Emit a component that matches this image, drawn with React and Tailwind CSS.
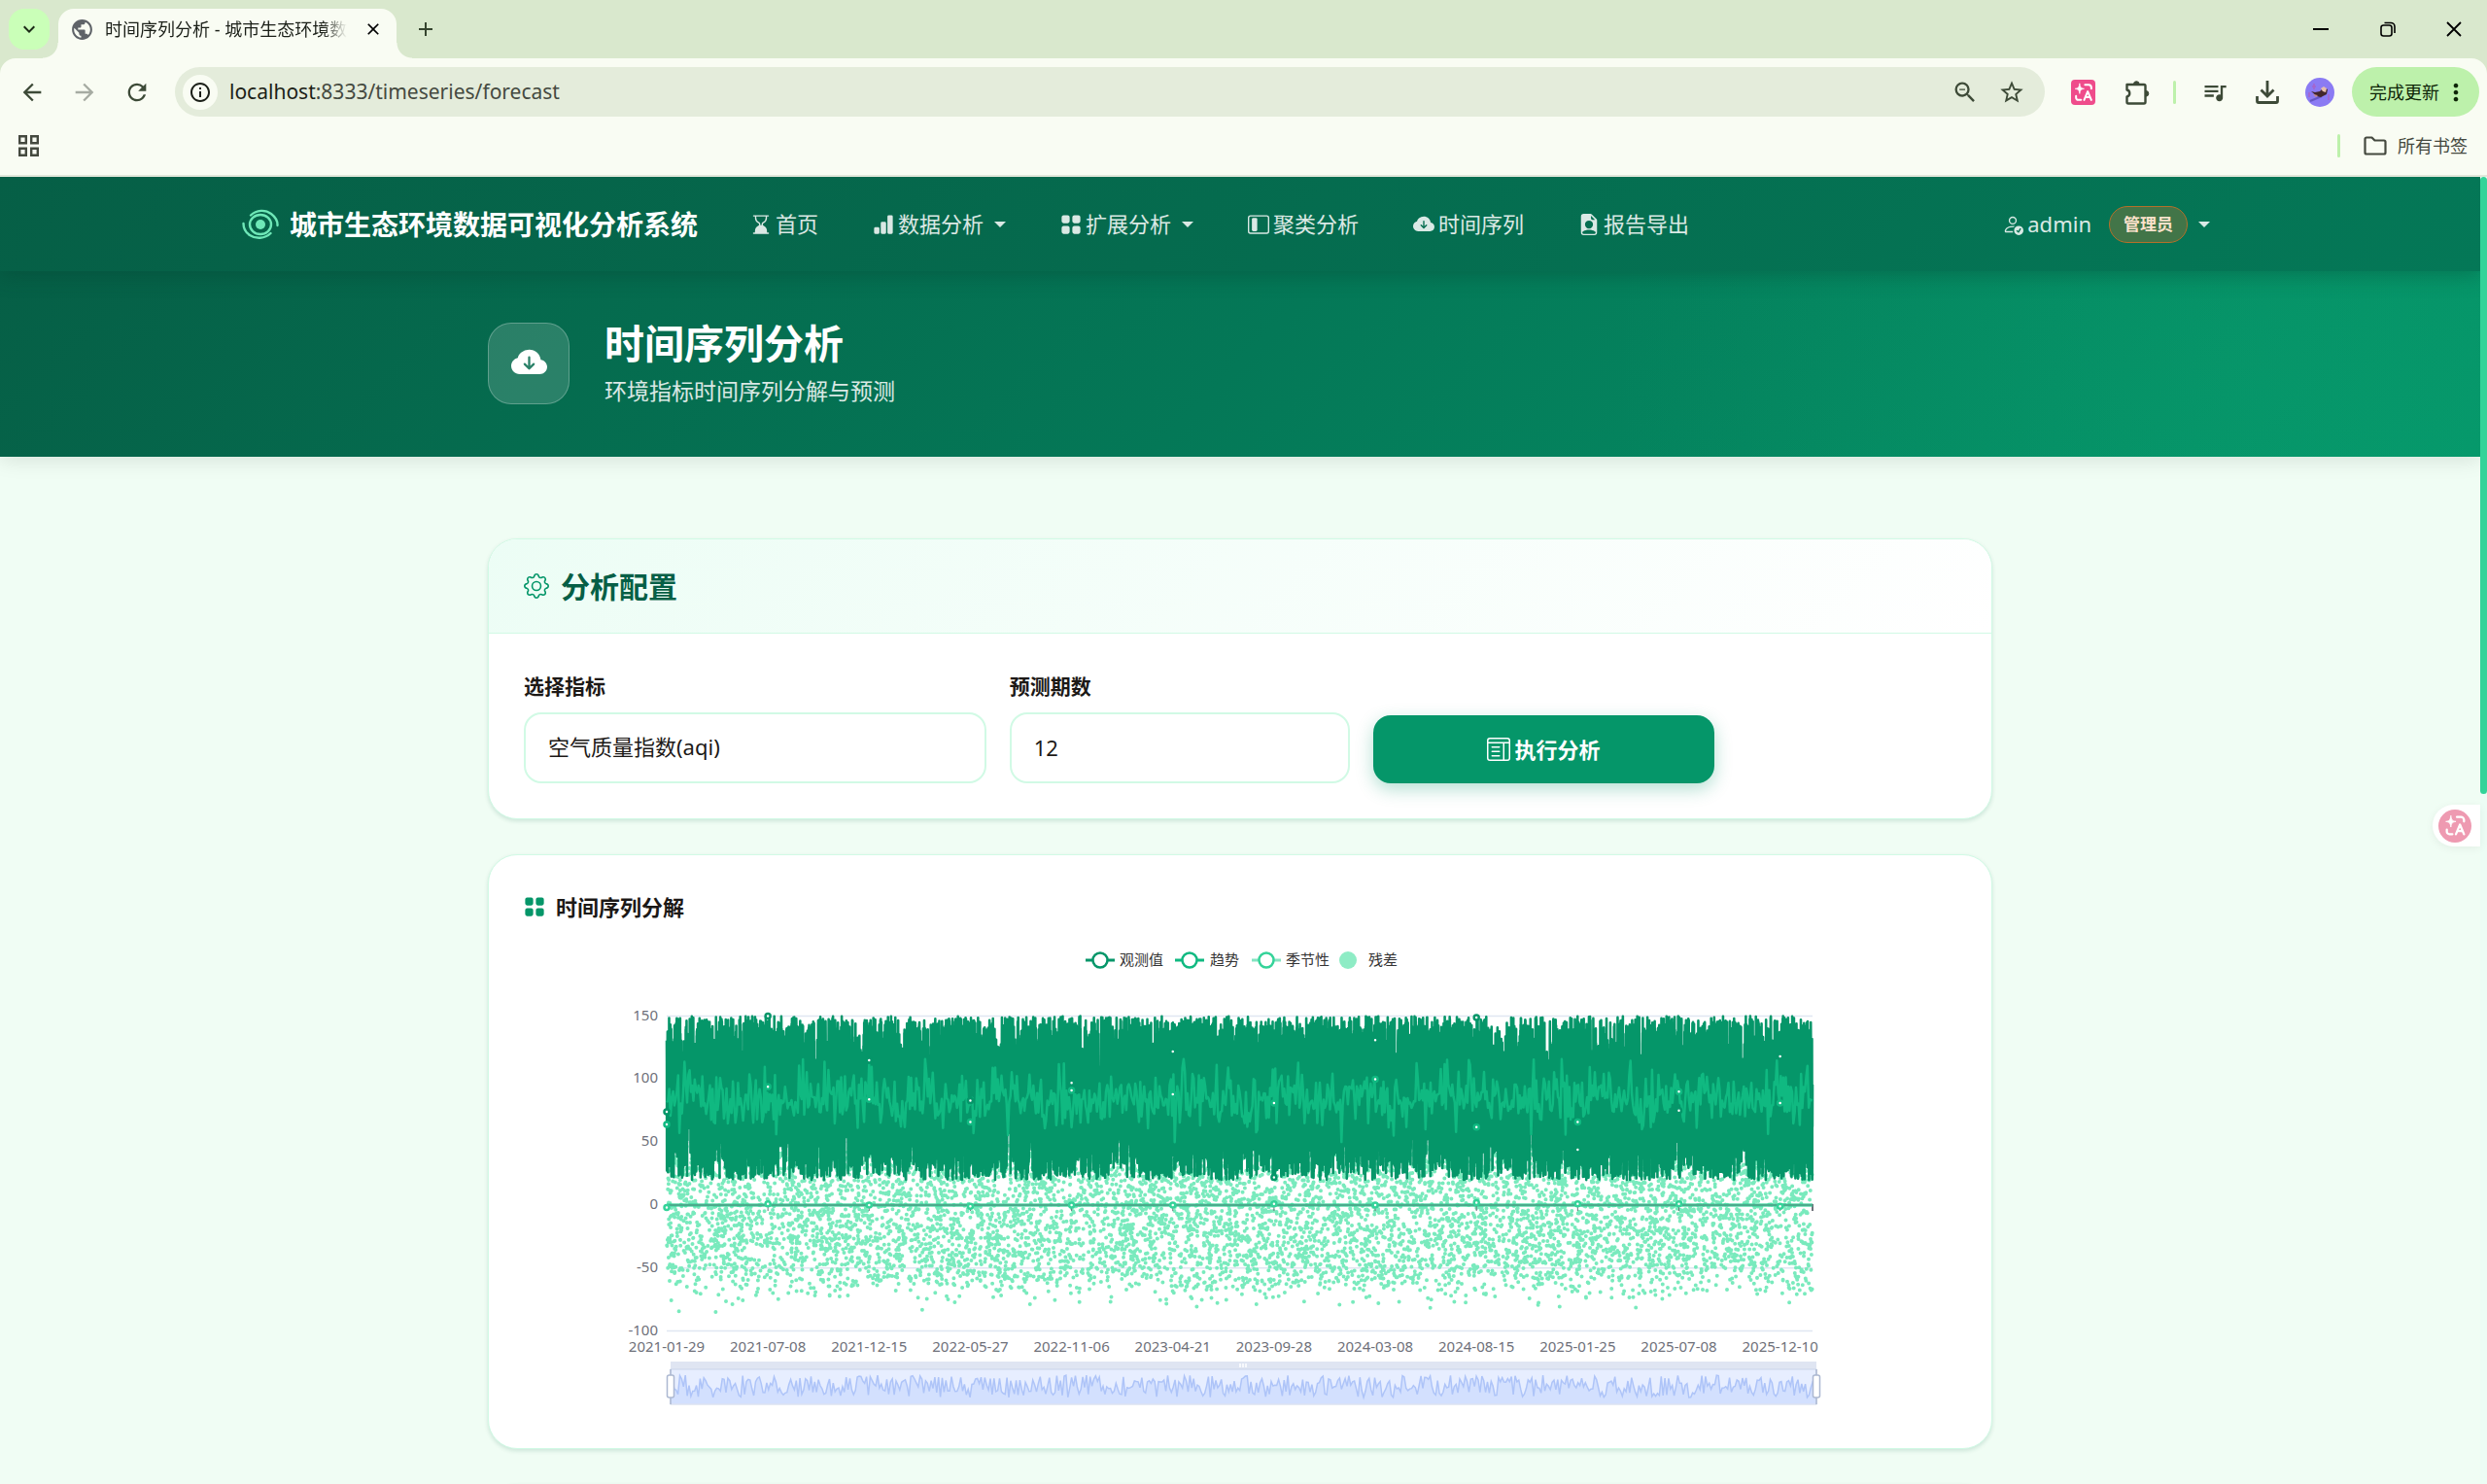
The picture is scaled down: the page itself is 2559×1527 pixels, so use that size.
import React, { useMemo } from 'react';
import {
  BsHourglassBottom,
  BsBarChartFill,
  BsGridFill,
  BsLayoutSidebarInset,
  BsCloudArrowDownFill,
  BsFileEarmarkPersonFill,
  BsPersonCheck,
  BsGear,
  BsLayoutTextWindow,
} from 'react-icons/bs';
import {
  MdArrowBack,
  MdArrowForward,
  MdRefresh,
  MdInfoOutline,
  MdStarOutline,
  MdQueueMusic,
  MdPublic,
  MdOutlineZoomOut,
  MdMoreVert,
  MdClose,
  MdAdd,
  MdKeyboardArrowDown,
} from 'react-icons/md';

function IconButton({ label, className = '', children }) {
  return (
    <button type="button" aria-label={label} className={`flex shrink-0 items-center justify-center ${className}`}>
      {children}
    </button>
  );
}

function TranslateGlyph({ className }) {
  return (
    <svg viewBox="0 0 26 26" className={className} fill="none" stroke="#fff" strokeWidth="2.2" strokeLinecap="round" strokeLinejoin="round">
      <path d="M8.500 3.500c.6 4 1.400 4.900 5 5.500-3.600.6-4.400 1.500-5 5.500-.6-4-1.400-4.900-5-5.500 3.600-.6 4.400-1.500 5-5.500z" fill="#fff" strokeWidth="0.800" />
      <path d="M14.500 4.500h4a3 3 0 0 1 3 3v1.500" />
      <path d="M4.500 17v2a2.500 2.500 0 0 0 2.500 2.500h3" />
      <path d="M13.500 21.500l4-9.500 4 9.500M15 18.500h5" />
    </svg>
  );
}

function TabStrip() {
  return (
    <div className="flex h-[60px] items-stretch bg-[#d9e8cd] pl-[9px]">
      <IconButton label="搜索标签页" className="mt-[9px] size-[42px] rounded-2xl bg-[#caffb8] text-[#1c2b17]">
        <MdKeyboardArrowDown className="size-6" />
      </IconButton>
      <div className="relative mt-[9px] ml-[9px] flex w-[348px] items-center rounded-t-2xl bg-[#f9fcf3] pr-[14px] pb-[9px] pl-[12px]">
        <span className="absolute bottom-0 -left-4 size-4 bg-[radial-gradient(circle_at_0_0,transparent_15px,#f9fcf3_16px)]" />
        <span className="absolute -right-4 bottom-0 size-4 bg-[radial-gradient(circle_at_100%_0,transparent_15px,#f9fcf3_16px)]" />
        <MdPublic className="size-[25px] shrink-0 text-[#5f6368]" />
        <span className="ml-[11px] bg-linear-to-r from-[#1b1f18] from-90% to-transparent bg-clip-text text-lg whitespace-nowrap text-transparent">
          时间序列分析 - 城市生态环境数
        </span>
        <IconButton label="关闭标签页" className="ml-auto text-black">
          <MdClose className="size-5" />
        </IconButton>
      </div>
      <IconButton label="新建标签页" className="ml-[18px] text-[#36452f]">
        <MdAdd className="size-6" />
      </IconButton>
      <div className="ml-auto flex items-center text-black">
        <IconButton label="最小化" className="w-[68px]">
          <svg viewBox="0 0 16 16" className="size-4"><path d="M0 8h16" stroke="currentColor" strokeWidth="2" /></svg>
        </IconButton>
        <IconButton label="还原" className="w-[69px]">
          <svg viewBox="0 0 16 16" className="size-4" fill="none" stroke="currentColor" strokeWidth="1.600">
            <rect x="1" y="4" width="11" height="11" rx="2.500" />
            <path d="M4.500 1.500H11a4 4 0 0 1 4 4V12" />
          </svg>
        </IconButton>
        <IconButton label="关闭" className="w-[68px]">
          <svg viewBox="0 0 16 16" className="size-4"><path d="M1 1l14 14M15 1L1 15" stroke="currentColor" strokeWidth="1.800" /></svg>
        </IconButton>
      </div>
    </div>
  );
}

function Toolbar() {
  return (
    <div className="bg-[#d9e8cd]">
      <div className="flex h-[69px] items-center rounded-t-2xl bg-[#f9fcf3] pr-2 pl-[19px] text-[#3d4a37]">
        <IconButton label="后退" className="w-7"><MdArrowBack className="size-7" /></IconButton>
        <IconButton label="前进" className="ml-[26px] w-7 text-[#a6aba2]"><MdArrowForward className="size-7" /></IconButton>
        <IconButton label="重新加载" className="ml-[26px] w-7"><MdRefresh className="size-7" /></IconButton>
        <div className="ml-[25px] flex h-[51px] flex-1 items-center rounded-full bg-[#e4ecdb] pr-[20px] pl-2">
          <span className="flex size-9 items-center justify-center rounded-full bg-[#f9fcf3] text-[#1b1f18]">
            <MdInfoOutline className="size-6" />
          </span>
          <div className="ml-3 flex-1 text-[21px] whitespace-nowrap">
            <span className="text-[#1b1f18]">localhost</span>
            <span className="text-[#454a41]">:8333/timeseries/forecast</span>
          </div>
          <IconButton label="缩放" className="w-7"><MdOutlineZoomOut className="size-7" /></IconButton>
          <IconButton label="收藏" className="ml-[20px] w-7"><MdStarOutline className="size-7" /></IconButton>
        </div>
        <IconButton label="翻译" className="ml-[27px] h-[26px] w-[25px] rounded-sm bg-[#ef4c8b]"><TranslateGlyph className="size-[24px]" /></IconButton>
        <IconButton label="扩展程序" className="ml-[29px] w-7">
          <svg viewBox="0 0 26 26" className="size-[26px]" fill="none" stroke="currentColor" strokeWidth="2.400" strokeLinejoin="round">
            <path d="M2.500 5H20a1.500 1.500 0 0 1 1.500 1.500V23a1.500 1.500 0 0 1-1.500 1.500H4A1.500 1.500 0 0 1 2.500 23v-5.500a3.600 3.600 0 0 0 0-7z" />
            <path d="M9.500 4.500a2.800 2.800 0 0 1 5.600 0zM22 11.500a2.800 2.800 0 0 1 0 5.600z" fill="currentColor" strokeWidth="1" />
          </svg>
        </IconButton>
        <span className="ml-[23px] h-6 w-[3px] rounded-full bg-[#bdf1ab]" />
        <IconButton label="媒体" className="ml-[26px] w-7"><MdQueueMusic className="size-8" /></IconButton>
        <IconButton label="下载" className="ml-[26px] w-7">
          <svg viewBox="0 0 24 24" className="size-6" fill="none" stroke="currentColor" strokeWidth="2.800">
            <path d="M12 0v15M5.500 9.500l6.500 6.500 6.500-6.500M1.500 16v5a1.500 1.500 0 0 0 1.500 1.500h18a1.500 1.500 0 0 0 1.500-1.500v-5" />
          </svg>
        </IconButton>
        <IconButton label="个人资料" className="ml-[25px] size-[30px] overflow-hidden rounded-full">
          <svg viewBox="0 0 30 30" className="size-[30px]">
            <rect width="30" height="30" fill="#8b7bf3" />
            <path d="M9 6v6M7 9h4M24 17v6M4 15v5" stroke="#a765c9" strokeWidth="1.500" />
            <path d="M5 24l12-5" stroke="#6558c4" strokeWidth="2" />
            <path d="M6 14l4 1 5-1 4-4 4 2-1 5-6 3-4-1z" fill="#43272b" />
            <path d="M16 11l3-2 3 2-1 4-3-1z" fill="#e7bfae" />
            <path d="M8 17l5 1-2 2z" fill="#c98a84" />
          </svg>
        </IconButton>
        <button type="button" className="ml-[18px] flex h-[51px] items-center rounded-full bg-[#bdf1ab] pr-[10px] pl-[18px] text-lg text-[#0e2507]">
          完成更新
          <MdMoreVert className="ml-[3px] size-7" />
        </button>
      </div>
      <div className="flex h-[53px] items-center justify-between border-b-2 border-[#e2e7da] bg-[#f9fcf3] pr-[20px] pb-[10px] pl-[19px] text-[#45493f]">
        <IconButton label="应用">
          <svg viewBox="0 0 21 22" className="h-[22px] w-[21px]" fill="none" stroke="currentColor" strokeWidth="2.400">
            <path d="M1.200 1.200h6.600v7H1.200zM13.200 1.200h6.600v7h-6.600zM1.200 13.800h6.600v7H1.200zM13.200 13.800h6.600v7h-6.600z" />
          </svg>
        </IconButton>
        <div className="flex items-center">
          <span className="h-6 w-[3px] rounded-full bg-[#bdf1ab]" />
          <button type="button" className="ml-[24px] flex items-center text-lg">
            <svg viewBox="0 0 24 20" className="mr-[11px] h-5 w-6" fill="none" stroke="currentColor" strokeWidth="2.200" strokeLinejoin="round">
              <path d="M1.500 3a1.500 1.500 0 0 1 1.500-1.500h5.500l3 3H21A1.500 1.500 0 0 1 22.500 6v11a1.500 1.500 0 0 1-1.500 1.500H3A1.500 1.500 0 0 1 1.500 17z" />
            </svg>
            所有书签
          </button>
        </div>
      </div>
    </div>
  );
}

function Caret() {
  return <span className="ml-[11px] border-x-[6px] border-t-[6px] border-x-transparent border-t-current" />;
}

const navItems = [
  { label: '首页', Icon: BsHourglassBottom },
  { label: '数据分析', Icon: BsBarChartFill, menu: true },
  { label: '扩展分析', Icon: BsGridFill, menu: true },
  { label: '聚类分析', Icon: BsLayoutSidebarInset },
  { label: '时间序列', Icon: BsCloudArrowDownFill },
  { label: '报告导出', Icon: BsFileEarmarkPersonFill },
];

function NavBar() {
  return (
    <header className="relative z-10 bg-[linear-gradient(135deg,#065f46,#047857)] shadow-[0_4px_20px_rgba(6,60,46,0.35)]">
      <div className="mx-auto flex h-[97px] max-w-[2054px] items-center pr-[29px]">
        <a href="#home" className="flex items-center text-[28px] leading-none font-bold whitespace-nowrap text-white">
          <svg viewBox="0 0 38 32" className="mr-[11px] h-8 w-[38px]" fill="none" stroke="#6ee7b7" strokeWidth="2.400" strokeLinecap="round">
            <circle cx="19" cy="16" r="5" fill="#6ee7b7" stroke="none" />
            <ellipse cx="19" cy="16" rx="11" ry="10" />
            <path d="M9 6.500C15 .8 24 .5 30 5c4.500 3.500 6.800 7.500 6.500 12" />
            <path d="M1.500 15c0 5 2 9 6.500 12 6 4 15.500 4 21.500-2" />
          </svg>
          城市生态环境数据可视化分析系统
        </a>
        <nav className="ml-[35px] flex items-center text-[22px] text-white/85">
          {navItems.map(({ label, Icon, menu }) => (
            <a key={label} href={`#${label}`} className="mr-[18px] flex items-center px-[19px] whitespace-nowrap">
              <Icon className="mr-1 size-[22px]" />
              {label}
              {menu && <Caret />}
            </a>
          ))}
        </nav>
        <button type="button" className="ml-auto flex items-center text-[22px] text-white/85">
          <BsPersonCheck className="mr-1 size-[22px]" />
          admin
          <span className="ml-[18px] rounded-full border border-[#b4702a] bg-[#427548] px-[14px] py-[5px] text-[17px] leading-[26px] font-bold text-[#fde2cb]">
            管理员
          </span>
          <Caret />
        </button>
      </div>
    </header>
  );
}

function Hero() {
  return (
    <section className="bg-[radial-gradient(circle_at_90%_50%,rgba(16,185,129,0.16),transparent_640px),linear-gradient(135deg,#065f46,#047857_50%,#059669)] shadow-[0_4px_20px_rgba(0,0,0,0.1)]">
      <div className="mx-auto flex h-[191px] w-[61%] max-w-[1548px] items-center pb-[2px]">
        <div className="flex size-[84px] shrink-0 items-center justify-center rounded-3xl border border-white/25 bg-white/15 text-white">
          <BsCloudArrowDownFill className="size-[37px]" />
        </div>
        <div className="ml-9">
          <h1 className="text-[41px] leading-[56px] font-bold text-white">时间序列分析</h1>
          <p className="text-[23px] leading-[42px] text-white/85">环境指标时间序列分解与预测</p>
        </div>
      </div>
    </section>
  );
}

const fieldClass = 'h-[73px] w-full appearance-none rounded-[18px] border-2 border-[#d1fae5] bg-white px-[23px] pb-[2px] text-[22px] text-[#1c1917]';

function ConfigCard() {
  return (
    <section className="overflow-hidden rounded-[30px] border border-[#d1fae5] bg-white shadow-[0_2px_4px_rgba(6,95,70,0.15)]">
      <div className="flex h-[97px] items-center border-b border-[#d1fae5] bg-linear-135 from-[#ecfdf5] to-white px-9">
        <BsGear className="mr-3 size-[26px] text-[#059669]" />
        <h2 className="pt-[2px] text-[30px] leading-none font-bold text-[#065f46]">分析配置</h2>
      </div>
      <form className="grid grid-cols-[475fr_350fr_350fr_225fr] gap-x-6 px-9 pt-9 pb-9">
        <div>
          <label htmlFor="metric" className="mb-[9px] block text-[21px] leading-9 font-bold text-[#1c1917]">选择指标</label>
          <select id="metric" className={fieldClass} defaultValue="aqi">
            <option value="aqi">空气质量指数(aqi)</option>
          </select>
        </div>
        <div>
          <label htmlFor="periods" className="mb-[9px] block text-[21px] leading-9 font-bold text-[#1c1917]">预测期数</label>
          <input id="periods" type="text" inputMode="numeric" defaultValue="12" className={fieldClass} />
        </div>
        <button type="button" className="flex h-[70px] items-center justify-center self-end rounded-[18px] bg-[#059669] text-[22px] font-bold text-white shadow-[0_6px_18px_rgba(5,150,105,0.3)]">
          <BsLayoutTextWindow className="mr-1 size-6" />
          执行分析
        </button>
      </form>
    </section>
  );
}

function createRandom(seed) {
  let a = seed;
  return () => {
    a = (a + 0x6d2b79f5) | 0;
    let t = Math.imul(a ^ (a >>> 15), 1 | a);
    t = (t + Math.imul(t ^ (t >>> 7), 61 | t)) ^ t;
    return ((t ^ (t >>> 14)) >>> 0) / 4294967296;
  };
}

const PLOT = { left: 147, right: 1326, top: 82, zero: 277, bottom: 407 };
const yOf = (v) => PLOT.zero - (v * 1296) / 1000;
const dates = ['2021-01-29', '2021-07-08', '2021-12-15', '2022-05-27', '2022-11-06', '2023-04-21', '2023-09-28', '2024-03-08', '2024-08-15', '2025-01-25', '2025-07-08', '2025-12-10'];
const observedMarks = [74, 150, 115, 83, 97, 122, 22, 131, 149, 44, 75, 118];
const trendMarks = [64, 94, 84, 66, 91, 88, 81, 100, 62, 66, 90, 81];
const seasonMarks = [-2, 1, 0, -1, 0, 0, 1, 0, 2, 1, 1, -1];

function buildSeries() {
  const rnd = createRandom(20210129);
  const gauss = () => (rnd() + rnd() + rnd() + rnd() + rnd() + rnd() - 3) * 1.41;
  const width = PLOT.right - PLOT.left;
  let observed = '';
  const n = 10500;
  for (let i = 0; i <= n; i += 1) {
    const x = PLOT.left + (i / n) * width;
    observed += `${i ? 'L' : 'M'}${x.toFixed(2)} ${yOf(20 + rnd() * 130).toFixed(1)}`;
  }
  let trend = '';
  const m = 900;
  for (let i = 0; i <= m; i += 1) {
    const x = PLOT.left + (i / m) * width;
    const v = Math.max(50, Math.min(116, 85 + gauss() * 12));
    trend += `${i ? 'L' : 'M'}${x.toFixed(1)} ${yOf(v).toFixed(1)}`;
  }
  let residual = '';
  for (let i = 0; i < 9600; i += 1) {
    const x = PLOT.left + rnd() * width;
    const v = rnd() * 128 - 62 + gauss() * 10;
    if (v < 48 && v > -86) residual += `M${x.toFixed(1)} ${yOf(v).toFixed(1)}h0`;
  }
  let overview = '';
  const k = 620;
  for (let i = 0; i <= k; i += 1) {
    const x = 151 + (i / k) * 1179;
    overview += `${i ? 'L' : 'M'}${x.toFixed(1)} ${(452 + rnd() * 23).toFixed(1)}`;
  }
  return { observed, trend, residual, overview };
}

const legend = [
  { label: '观测值', x: 578, textX: 613, color: '#059669' },
  { label: '趋势', x: 670, textX: 706, color: '#10b981' },
  { label: '季节性', x: 749, textX: 784, color: '#34d399', faded: true },
  { label: '残差', x: 839, textX: 869, color: '#8eecc5', dot: true },
];

function DecompositionChart() {
  const { observed, trend, residual, overview } = useMemo(buildSeries, []);
  const markX = (i) => PLOT.left + i * 104.15;
  return (
    <svg viewBox="0 0 1474 510" className="block w-full text-[15px]" role="img" aria-label="时间序列分解图">
      {legend.map((item) => (
        <g key={item.label}>
          {item.dot ? (
            <circle cx={item.x + 9} cy="25" r="9" fill={item.color} />
          ) : (
            <>
              <path d={`M${item.x} 25h30`} stroke={item.color} strokeWidth="3" opacity={item.faded ? 0.6 : 1} />
              <circle cx={item.x + 15} cy="25" r="7.500" fill="#fff" stroke={item.color} strokeWidth="2.500" />
            </>
          )}
          <text x={item.textX} y="30" fill="#333">{item.label}</text>
        </g>
      ))}
      {[150, 100, 50, 0, -50, -100].map((v) => (
        <g key={v}>
          <path d={`M${PLOT.left} ${yOf(v)}H${PLOT.right}`} stroke="#e0e6f1" strokeWidth="1.500" />
          <text x="138" y={yOf(v) + 4} textAnchor="end" fill="#6e7079">{v}</text>
        </g>
      ))}
      <path d={residual} stroke="#79eabd" strokeWidth="4" strokeLinecap="round" fill="none" />
      <path d={`M${PLOT.left} ${yOf(0)}H${PLOT.right}v6`} fill="none" stroke="#6e7079" strokeWidth="2" />
      <path d={`M${PLOT.left} ${yOf(0)}H${PLOT.right}`} stroke="#34d399" strokeWidth="4" opacity="0.600" />
      <path d={observed} fill="none" stroke="#059669" strokeWidth="2.600" strokeLinejoin="round" />
      <path d={trend} fill="none" stroke="#10b981" strokeWidth="2.500" strokeLinejoin="round" />
      {dates.map((date, i) => (
        <g key={date}>
          <path d={`M${markX(i)} ${yOf(0)}v6`} stroke="#6e7079" strokeWidth="1" />
          <circle cx={markX(i)} cy={yOf(observedMarks[i])} r="2.500" fill="#fff" stroke="#059669" strokeWidth="2.500" />
          <circle cx={markX(i)} cy={yOf(trendMarks[i])} r="2.500" fill="#fff" stroke="#10b981" strokeWidth="2.500" />
          <circle cx={markX(i)} cy={yOf(seasonMarks[i])} r="2.500" fill="#fff" stroke="#34d399" strokeWidth="2.500" />
          <text x={markX(i)} y="428" textAnchor="middle" fill="#6e7079">{date}</text>
        </g>
      ))}
      <rect x="151" y="438" width="1179" height="8" fill="#dfe5f2" />
      <rect x="151" y="446" width="1179" height="36" fill="#e7eeff" stroke="#ccd5ea" />
      <path d={`${overview}V481H151z`} fill="#d3e0fe" />
      <path d={overview} fill="none" stroke="#aec4f8" strokeWidth="1.500" />
      <path d="M737 440v4M740 440v4M743 440v4" stroke="#fff" strokeWidth="1.500" />
      <path d="M151 446v36M1330 446v36" stroke="#acb8d1" strokeWidth="1.500" />
      <rect x="147.500" y="452" width="7" height="23" rx="2" fill="#fff" stroke="#acb8d1" strokeWidth="1.500" />
      <rect x="1326.500" y="452" width="7" height="23" rx="2" fill="#fff" stroke="#acb8d1" strokeWidth="1.500" />
    </svg>
  );
}

function ChartCard() {
  return (
    <section className="mt-9 rounded-[30px] border border-[#d1fae5] bg-white px-9 pt-9 shadow-[0_2px_4px_rgba(6,95,70,0.15)]">
      <h3 className="flex h-[34px] items-center text-[22px] leading-none font-bold text-[#1c1917]">
        <BsGridFill className="mr-[11px] size-[22px] text-[#059669]" />
        时间序列分解
      </h3>
      <div className="mt-[13px] pb-[17px]">
        <DecompositionChart />
      </div>
    </section>
  );
}

export default function App() {
  return (
    <div className="flex h-screen flex-col overflow-hidden bg-[#f0fdf4] font-['Noto_Sans','Noto_Sans_CJK_SC',sans-serif] text-base">
      <TabStrip />
      <Toolbar />
      <div className="relative flex min-h-0 flex-1">
        <div className="min-w-0 flex-1 overflow-hidden">
          <NavBar />
          <Hero />
          <main className="mx-auto w-[61%] max-w-[1548px] pt-[84px]">
            <ConfigCard />
            <ChartCard />
            <section className="mt-9 h-40 rounded-[30px] border border-[#d1fae5] bg-white shadow-[0_2px_4px_rgba(6,95,70,0.15)]" />
          </main>
        </div>
        <div className="w-[7px] bg-[#ecfdf5]">
          <div className="h-[635px] rounded-full bg-[#34d399]" />
        </div>
        <button type="button" aria-label="翻译此页" className="absolute top-[646px] right-[7px] flex h-[43px] w-[49px] items-center rounded-l-full bg-white pl-[6px] shadow-[0_2px_10px_rgba(0,0,0,0.06)]">
          <span className="flex size-[34px] items-center justify-center rounded-full bg-[#ee9ab1]"><TranslateGlyph className="size-[27px]" /></span>
        </button>
      </div>
    </div>
  );
}
